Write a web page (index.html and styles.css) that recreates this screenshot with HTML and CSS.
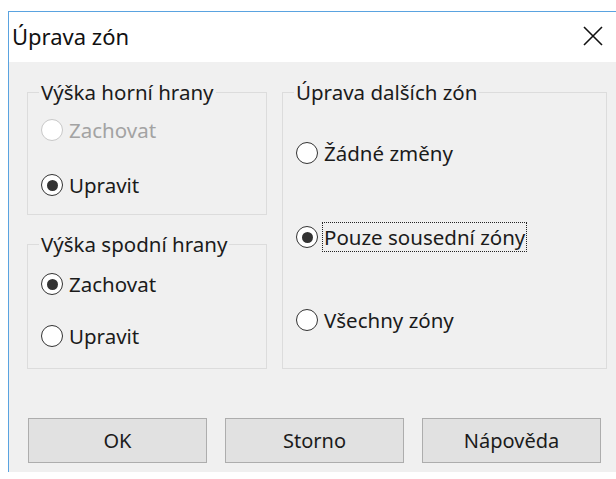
FILE: index.html
```html
<!DOCTYPE html>
<html lang="cs">
<head>
<meta charset="utf-8">
<title>Úprava zón</title>
<link rel="stylesheet" href="styles.css">
</head>
<body>
<div class="window">
  <div class="titlebar">
    <span class="title">Úprava zón</span>
    <svg class="close" viewBox="0 0 20 20" width="20" height="20" aria-hidden="true">
      <path d="M1 1 L19 19 M19 1 L1 19" stroke="#111" stroke-width="1.6" fill="none"/>
    </svg>
  </div>
  <div class="client">
    <div class="groups">
      <div class="col-left">
        <fieldset class="group group-top">
          <legend>Výška horní hrany</legend>
          <div class="option disabled gap-a1"><span class="radio"></span><span class="text">Zachovat</span></div>
          <div class="option gap-a2"><span class="radio checked"></span><span class="text">Upravit</span></div>
        </fieldset>
        <fieldset class="group group-bottom">
          <legend>Výška spodní hrany</legend>
          <div class="option gap-b1"><span class="radio checked"></span><span class="text">Zachovat</span></div>
          <div class="option gap-b2"><span class="radio"></span><span class="text">Upravit</span></div>
        </fieldset>
      </div>
      <fieldset class="group group-right">
        <legend>Úprava dalších zón</legend>
        <div class="option gap-c1"><span class="radio"></span><span class="text">Žádné změny</span></div>
        <div class="option gap-c2"><span class="radio checked"></span><span class="text focused">Pouze sousední zóny</span></div>
        <div class="option gap-c3"><span class="radio"></span><span class="text">Všechny zóny</span></div>
      </fieldset>
    </div>
    <div class="buttons">
      <button class="btn">OK</button>
      <button class="btn">Storno</button>
      <button class="btn">Nápověda</button>
    </div>
  </div>
</div>
</body>
</html>
```
FILE: styles.css
```css
* { box-sizing: border-box; }

html, body {
  margin: 0;
  background: #ffffff;
}

body {
  padding: 11px 0 0 8px;
  font-family: "Noto Sans", "Open Sans", sans-serif;
  font-size: 20.5px;
  color: #1b1b1b;
}

.window {
  border-top: 1px solid #5aa3e0;
  border-left: 1px solid #5aa3e0;
  width: 608px;
}

.titlebar {
  height: 50px;
  background: #ffffff;
  display: flex;
  align-items: center;
  justify-content: space-between;
  padding: 0 13px 2px 3px;
}

.title {
  font-size: 22px;
  color: #111;
}

.close {
  display: block;
}

.client {
  background: #f0f0f0;
  height: 410px;
  padding: 19px 0 0 18px;
}

.groups {
  display: flex;
  gap: 15px;
}

.col-left {
  width: 240px;
  display: flex;
  flex-direction: column;
  gap: 18px;
}

.group {
  margin: 0;
  min-inline-size: 0;
  border: 1px solid #dcdcdc;
  padding: 0 8px 0 13px;
}

.group legend {
  line-height: 22px;
  padding: 0 2px;
  margin-left: -2px;
  color: #1b1b1b;
}

.group-top { height: 134px; }
.group-bottom { height: 136px; }
.group-right { width: 325px; height: 288px; }

.option {
  display: flex;
  align-items: center;
  height: 26px;
  line-height: 26px;
}

.gap-a1 { margin-top: 14px; }
.gap-a2 { margin-top: 29px; }
.gap-b1 { margin-top: 16px; }
.gap-b2 { margin-top: 26px; }
.gap-c1 { margin-top: 37px; }
.gap-c2 { margin-top: 58px; }
.gap-c3 { margin-top: 57px; }

.radio {
  flex: none;
  width: 22px;
  height: 22px;
  border-radius: 50%;
  border: 1.6px solid #333;
  background: #ffffff;
  margin-right: 6px;
  display: flex;
  align-items: center;
  justify-content: center;
}

.radio.checked::after {
  content: "";
  width: 11px;
  height: 11px;
  border-radius: 50%;
  background: #333;
}

.option.disabled .radio {
  border-color: #c8c8c8;
}

.option.disabled .text {
  color: #a3a3a3;
}

.text.focused {
  outline: 1px dotted #222;
  outline-offset: 1px;
  line-height: 26px;
}

.buttons {
  display: flex;
  gap: 18px;
  margin-top: 49px;
  margin-left: 1px;
}

.btn {
  width: 179px;
  height: 45px;
  background: #e1e1e1;
  border: 1px solid #adadad;
  font-family: inherit;
  font-size: 20px;
  color: #1b1b1b;
  padding: 0;
}
```
